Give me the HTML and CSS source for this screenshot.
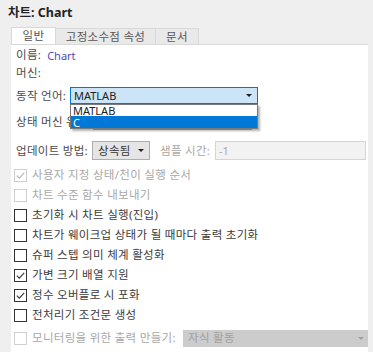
FILE: index.html
```html
<!DOCTYPE html>
<html lang="ko">
<head>
    <meta charset="utf-8">
    <title>차트: Chart</title>
    <link rel="stylesheet" href="styles.css">
</head>
<body>
    <div class="title">차트: <span class="latin">Chart</span></div>

    <div class="tabs">
        <div class="tab active">일반</div>
        <div class="tab">고정소수점 속성</div>
        <div class="tab">문서</div>
    </div>

    <div class="panel">
        <div class="row row-name">
            <span class="label">이름:</span>
            <span class="value latin">Chart</span>
        </div>
        <div class="row row-machine">
            <span class="label">머신:</span>
        </div>

        <div class="row row-lang">
            <span class="label w-lang">동작 언어:</span>
            <div class="select select-open">
                <span class="latin">MATLAB</span>
                <span class="arrow"></span>
            </div>
            <ul class="popup">
                <li class="latin">MATLAB</li>
                <li class="latin picked">C</li>
            </ul>
        </div>

        <div class="row row-state">
            <span class="label w-state">상태 머신 유형:</span>
            <div class="select select-state">
                <span class="arrow"></span>
            </div>
        </div>

        <div class="row row-update">
            <span class="label w-update">업데이트 방법:</span>
            <div class="select select-update">
                <span>상속됨</span>
                <span class="arrow"></span>
            </div>
            <span class="label dim w-sample">샘플 시간:</span>
            <div class="input-dim latin">-1</div>
        </div>

        <div class="checks">
            <label class="check off"><span class="box"><svg viewBox="0 0 11 11"><path d="M1.8 5.6 L4.3 8.1 L9.2 2.8"/></svg></span>사용자 지정 상태/천이 실행 순서</label>
            <label class="check off"><span class="box"></span>차트 수준 함수 내보내기</label>
            <label class="check"><span class="box"></span>초기화 시 차트 실행(진입)</label>
            <label class="check"><span class="box"></span>차트가 웨이크업 상태가 될 때마다 출력 초기화</label>
            <label class="check"><span class="box"></span>슈퍼 스텝 의미 체계 활성화</label>
            <label class="check"><span class="box"><svg viewBox="0 0 11 11"><path d="M1.8 5.6 L4.3 8.1 L9.2 2.8"/></svg></span>가변 크기 배열 지원</label>
            <label class="check"><span class="box"><svg viewBox="0 0 11 11"><path d="M1.8 5.6 L4.3 8.1 L9.2 2.8"/></svg></span>정수 오버플로 시 포화</label>
            <label class="check"><span class="box"></span>전처리기 조건문 생성</label>
        </div>

        <div class="row row-monitor">
            <label class="check off"><span class="box"></span>모니터링을 위한 출력 만들기:</label>
            <div class="select select-monitor">
                <span>자식 활동</span>
                <span class="arrow"></span>
            </div>
        </div>
    </div>
</body>
</html>
```

FILE: styles.css
```css
html, body
{
    margin: 0;
    padding: 0;
    overflow: hidden;
}
body
{
    width: 373px;
    height: 352px;
    background-color: #efefef;
    color: #3c3c3c;
    font-family: "Noto Sans", "Noto Sans CJK KR", sans-serif;
    font-size: 11.5px;
    letter-spacing: 0.3px;
    line-height: 1;
}
.latin
{
    letter-spacing: 0;
    font-size: 11px;
}
.title
{
    height: 27px;
    padding-left: 8px;
    display: flex;
    align-items: center;
    font-weight: bold;
    font-size: 12.5px;
    letter-spacing: 0;
    color: #222;
    white-space: pre;
}
.title .latin
{
    font-size: 12.5px;
}

/* tabs */
.tabs
{
    display: flex;
    margin-left: 11px;
    height: 17px;
}
.tab
{
    display: flex;
    align-items: center;
    justify-content: center;
    height: 16px;
    margin-top: 1px;
    background-color: #e9e9e9;
    border: 1px solid #d9d9d9;
    border-bottom: none;
    border-left: none;
    color: #555;
    box-sizing: border-box;
}
.tab:nth-child(1) { width: 45px; }
.tab:nth-child(2) { width: 100px; }
.tab:nth-child(3) { width: 43px; }
.tab.active
{
    background-color: #fff;
    border-left: 1px solid #d9d9d9;
    height: 17px;
    margin-top: 0;
    margin-bottom: -1px;
    position: relative;
}

/* panel */
.panel
{
    margin-left: 11px;
    width: 357px;
    height: 308px;
    background-color: #fff;
    border-top: 1px solid #d9d9d9;
    padding-left: 3px;
    box-sizing: border-box;
}
.row
{
    display: flex;
    align-items: center;
    padding-left: 2px;
    position: relative;
}
.row-name { margin-top: 1px; height: 18px; }
.row-machine { height: 17px; }
.row-lang { margin-top: 6px; height: 17px; }
.row-state { margin-top: 9px; height: 17px; }
.row-update { margin-top: 11px; height: 19px; }
.row-monitor { margin-top: 3px; height: 20px; padding-left: 0; }

.label
{
    color: #4a4a4a;
    white-space: nowrap;
    flex: none;
}
.label.dim
{
    color: #a8a8a8;
}
.w-lang { width: 54px; }
.w-state { width: 77px; }
.w-update { width: 76px; }
.w-sample { width: 55px; margin-left: 10px; }
.value
{
    margin-left: 6px;
    color: #4d4db8;
}

/* drop-down fields */
.select
{
    display: flex;
    align-items: center;
    justify-content: space-between;
    box-sizing: border-box;
    padding: 0 5px 0 3px;
    border: 1px solid #adadad;
    background-color: #e5e5e5;
    color: #333;
    flex: none;
}
.arrow
{
    width: 0;
    height: 0;
    border-left: 3px solid transparent;
    border-right: 3px solid transparent;
    border-top: 3px solid #222;
}
.select-open
{
    width: 188px;
    height: 17px;
    background-color: #cce4f7;
    border-color: #0078d7;
    color: #222;
}
.select-state
{
    width: 159px;
    height: 17px;
    justify-content: flex-end;
}
.select-update
{
    width: 58px;
    height: 19px;
    padding-left: 5px;
}
.input-dim
{
    width: 151px;
    height: 19px;
    box-sizing: border-box;
    border: 1px solid #d4d4d4;
    background-color: #f2f2f2;
    color: #a8a8a8;
    display: flex;
    align-items: center;
    padding-left: 3px;
}
.select-monitor
{
    margin-left: auto;
    width: 185px;
    height: 17px;
    background-color: #cccccc;
    border-color: #cccccc;
    color: #a0a0a0;
    padding-left: 4px;
    padding-right: 3px;
}
.select-monitor .arrow
{
    border-top-color: #a0a0a0;
}

/* open list of the language field */
.popup
{
    position: absolute;
    left: 56px;
    top: 17px;
    width: 186px;
    margin: 0;
    padding: 0;
    list-style: none;
    background-color: #fff;
    border: 1px solid #7a7a7a;
    box-shadow: 2px 2px 2px rgba(0, 0, 0, 0.3);
    z-index: 2;
}
.popup li
{
    height: 11px;
    padding-left: 2px;
    display: flex;
    align-items: center;
    color: #222;
}
.popup li.picked
{
    height: 12px;
    background-color: #0078d7;
    color: #fff;
}

/* check boxes */
.checks
{
    margin-top: 5px;
}
.check
{
    display: flex;
    align-items: center;
    height: 20px;
    white-space: nowrap;
    color: #3c3c3c;
}
.box
{
    width: 13px;
    height: 13px;
    box-sizing: border-box;
    border: 1px solid #333;
    background-color: #fff;
    margin-right: 5px;
    flex: none;
}
.box svg
{
    display: block;
    width: 11px;
    height: 11px;
}
.box path
{
    fill: none;
    stroke: #333;
    stroke-width: 1.1;
}
.check.off
{
    color: #a8a8a8;
}
.check.off .box
{
    border-color: #cfcfcf;
}
.check.off .box path
{
    stroke: #b5b5b5;
}
```
